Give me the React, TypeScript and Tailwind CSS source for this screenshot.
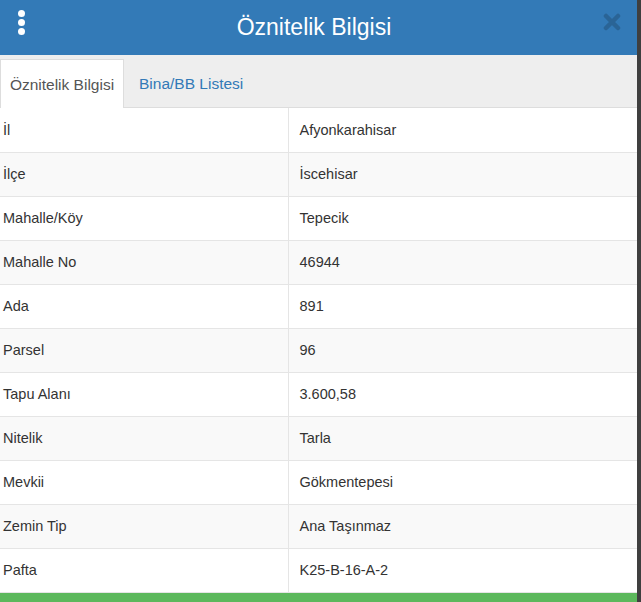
import { useState } from "react";

const rows: [string, string][] = [
  ["İl", "Afyonkarahisar"],
  ["İlçe", "İscehisar"],
  ["Mahalle/Köy", "Tepecik"],
  ["Mahalle No", "46944"],
  ["Ada", "891"],
  ["Parsel", "96"],
  ["Tapu Alanı", "3.600,58"],
  ["Nitelik", "Tarla"],
  ["Mevkii", "Gökmentepesi"],
  ["Zemin Tip", "Ana Taşınmaz"],
  ["Pafta", "K25-B-16-A-2"],
];

export default function App() {
  const [tab, setTab] = useState<"attr" | "list">("attr");

  return (
    <div
      className="flex h-[602px] w-[641px] overflow-hidden bg-[#3f3f3f]"
      style={{ fontFamily: '"Liberation Sans", Arial, sans-serif' }}
    >
      <div className="flex w-[637px] flex-col bg-white">
        <header className="relative flex h-[55px] shrink-0 items-center justify-center bg-[#337ab7] pr-[9px]">
          <button className="absolute left-[18px] top-[10px] flex flex-col gap-[2px]">
            <span className="h-[7px] w-[7px] rounded-full bg-white" />
            <span className="h-[7px] w-[7px] rounded-full bg-white" />
            <span className="h-[7px] w-[7px] rounded-full bg-white" />
          </button>
          <h1 className="text-[23px] text-white">Öznitelik Bilgisi</h1>
          <button className="absolute right-[16px] top-[13px]">
            <svg width="18" height="18" viewBox="0 0 18 18">
              <path
                d="M3 3 L15 15 M15 3 L3 15"
                stroke="#2a6496"
                strokeWidth="4.5"
                strokeLinecap="round"
              />
            </svg>
          </button>
        </header>

        <nav className="flex h-[53px] shrink-0 items-end border-b border-[#ddd] bg-[#eee]">
          <button
            onClick={() => setTab("attr")}
            className={
              tab === "attr"
                ? "-mb-px flex h-[49px] w-[124px] items-center justify-center border border-b-0 border-[#ddd] bg-white pt-[2px] text-[15.5px] text-[#555]"
                : "flex h-[49px] w-[124px] items-center justify-center pt-[2px] text-[15.5px] text-[#337ab7]"
            }
          >
            Öznitelik Bilgisi
          </button>
          <button
            onClick={() => setTab("list")}
            className={
              tab === "list"
                ? "-mb-px flex h-[49px] items-center border border-b-0 border-[#ddd] bg-white px-[15px] pt-[2px] text-[15.5px] text-[#555]"
                : "flex h-[49px] items-center px-[15px] pt-[2px] text-[15.5px] text-[#337ab7]"
            }
          >
            Bina/BB Listesi
          </button>
        </nav>

        <table className="w-full shrink-0 border-collapse text-[14.5px] text-[#333]">
          <tbody>
            {rows.map(([label, value], i) => (
              <tr
                key={label}
                className={i % 2 === 0 ? "h-[44px] bg-white" : "h-[44px] bg-[#f9f9f9]"}
              >
                <td className="w-[288px] border-r border-b border-[#e5e5e5] pt-[2px] pl-[3px]">
                  {label}
                </td>
                <td className="border-b border-[#e5e5e5] pt-[2px] pl-[11px]">{value}</td>
              </tr>
            ))}
          </tbody>
        </table>

        <div className="h-[12px] shrink-0 bg-[#5cb85c]" />
      </div>
    </div>
  );
}
